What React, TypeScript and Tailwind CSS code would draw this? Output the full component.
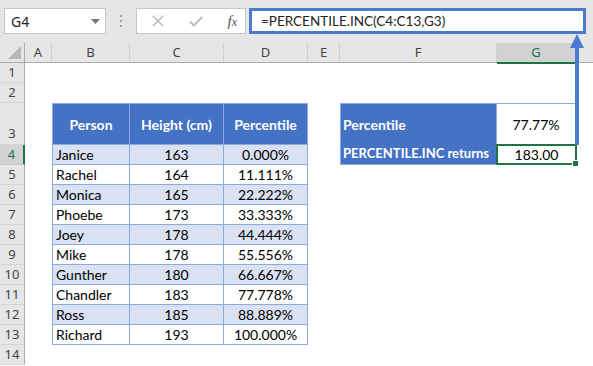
import React from "react";

const CELL_FONT = { fontFamily: "Lato, 'Open Sans', sans-serif" };

const colW = [25, 27, 78, 94, 84, 32, 157, 79];
const people: [string, number, string][] = [
  ["Janice", 163, "0.000%"],
  ["Rachel", 164, "11.111%"],
  ["Monica", 165, "22.222%"],
  ["Phoebe", 173, "33.333%"],
  ["Joey", 178, "44.444%"],
  ["Mike", 178, "55.556%"],
  ["Gunther", 180, "66.667%"],
  ["Chandler", 183, "77.778%"],
  ["Ross", 185, "88.889%"],
  ["Richard", 193, "100.000%"],
];

function RowHead({ n, active, h, bottom }: { n: number; active?: boolean; h: string; bottom?: boolean }) {
  return (
    <div
      className={`${h} w-[25px] shrink-0 flex justify-center border-b border-r ${
        bottom ? "items-end pb-[1px]" : "items-center"
      } ${
        active
          ? "bg-[#d2d2d2] text-[#217346] border-r-[#217346] border-r-2 border-b-[#c6c6c6]"
          : "bg-[#e6e6e6] text-[#444] border-b-[#d4d4d4] border-r-[#ababab]"
      } text-[13px]`}
      style={{ fontFamily: "'Noto Sans', sans-serif" }}
    >
      {n}
    </div>
  );
}

function Cell({ w, className = "", children }: { w: string; className?: string; children?: React.ReactNode }) {
  return <div className={`${w} shrink-0 ${className}`}>{children}</div>;
}

export default function App() {
  return (
    <div className="w-[593px] h-[366px] overflow-hidden bg-white relative text-[14px] text-black">
      {/* Formula bar */}
      <div className="h-[43px] bg-[#e6e6e6] flex items-start pt-[8px]">
        <div className="ml-[4px] w-[102px] h-[26px] bg-white border border-[#c6c6c6] flex items-center justify-between pl-[6px] pr-[5px]">
          <span className="text-[14px] text-[#222]" style={{ fontFamily: "'Noto Sans', sans-serif" }}>G4</span>
          <svg width="9" height="5" viewBox="0 0 9 5"><path d="M0 0H9L4.5 5Z" fill="#777" /></svg>
        </div>
        <div className="w-[30px] h-[26px] flex items-center justify-center">
          <svg width="3" height="12" viewBox="0 0 3 12">
            <rect x="0" y="0" width="2" height="2" fill="#a0a0a0" />
            <rect x="0" y="5" width="2" height="2" fill="#a0a0a0" />
            <rect x="0" y="10" width="2" height="2" fill="#a0a0a0" />
          </svg>
        </div>
        <div className="w-[110px] h-[26px] bg-white border border-[#c6c6c6] flex items-center pl-[15px] pr-[8px] justify-between">
          <svg width="12" height="12" viewBox="0 0 12 12"><path d="M1 1L11 11M11 1L1 11" stroke="#bdbdbd" strokeWidth="1.6" /></svg>
          <svg width="14" height="11" viewBox="0 0 14 11"><path d="M1 5.5L5 9.5L13 1" stroke="#bdbdbd" strokeWidth="2" fill="none" /></svg>
          <span className="italic text-[#555] text-[15px] leading-none" style={{ fontFamily: "'Liberation Serif', serif" }}>
            f<span className="text-[12px]">x</span>
          </span>
        </div>
        <div className="ml-[3px] w-[337px] h-[26px] bg-white border-[3px] border-[#4a7bd0] flex items-center pl-[9px]">
          <span className="text-[13.5px] text-[#222] whitespace-nowrap" style={CELL_FONT}>=PERCENTILE.INC(C4:C13,G3)</span>
        </div>
      </div>

      {/* Column headers */}
      <div className="h-[20px] flex bg-[#e6e6e6] border-b border-[#ababab] text-[13px] text-[#444]" style={{ fontFamily: "'Noto Sans', sans-serif" }}>
        <div className="w-[25px] shrink-0 border-r border-[#ababab] relative">
          <svg className="absolute left-[8px] top-[3px]" width="13" height="13" viewBox="0 0 13 13"><path d="M13 0V13H0Z" fill="#b8b8b8" /></svg>
        </div>
        {["A", "B", "C", "D", "E", "F"].map((l, i) => (
          <div key={l} className="shrink-0 border-r border-[#d0d0d0] flex items-center justify-center" style={{ width: colW[i + 1] }}>
            {l}
          </div>
        ))}
        <div className="w-[79px] shrink-0 bg-[#d2d2d2] border-b-2 border-[#217346] border-r border-r-[#d0d0d0] flex items-center justify-center text-[#217346] h-[21px]">
          G
        </div>
        <div className="flex-1" />
      </div>

      {/* Rows 1-2 */}
      <div className="flex"><RowHead n={1} h="h-[20px]" /></div>
      <div className="flex"><RowHead n={2} h="h-[20px]" /></div>

      {/* Row 3 */}
      <div className="flex" style={CELL_FONT}>
        <RowHead n={3} h="h-[42px]" bottom />
        <Cell w="w-[27px]" />
        <Cell w="w-[78px]" className="h-[42px] bg-[#4472c4] border border-[#8ea9db] text-white font-bold flex items-center justify-center">Person</Cell>
        <Cell w="w-[94px]" className="h-[42px] bg-[#4472c4] border-y border-r border-[#8ea9db] text-white font-bold flex items-center justify-center">Height (cm)</Cell>
        <Cell w="w-[84px]" className="h-[42px] bg-[#4472c4] border-y border-r border-[#8ea9db] text-white font-bold flex items-center justify-center">Percentile</Cell>
        <Cell w="w-[32px]" />
        <Cell w="w-[157px]" className="h-[42px] bg-[#4472c4] border border-[#8ea9db] text-white font-bold flex items-center pl-[2px]">Percentile</Cell>
        <Cell w="w-[79px]" className="h-[42px] bg-white border-y border-r border-[#8ea9db] flex items-center justify-center">77.77%</Cell>
      </div>

      {/* Data rows */}
      {people.map(([name, h, p], i) => (
        <div key={name} className="flex" style={CELL_FONT}>
          <RowHead n={i + 4} h="h-[20px]" active={i === 0} />
          <Cell w="w-[27px]" />
          <Cell w="w-[78px]" className={`h-[20px] border-x border-b border-[#8ea9db] flex items-center pl-[3px] ${i % 2 === 0 ? "bg-[#d9e1f2]" : "bg-white"}`}>{name}</Cell>
          <Cell w="w-[94px]" className={`h-[20px] border-r border-b border-[#8ea9db] flex items-center justify-center ${i % 2 === 0 ? "bg-[#d9e1f2]" : "bg-white"}`}>{h}</Cell>
          <Cell w="w-[84px]" className={`h-[20px] border-r border-b border-[#8ea9db] flex items-center justify-center ${i % 2 === 0 ? "bg-[#d9e1f2]" : "bg-white"}`}>{p}</Cell>
          {i === 0 && (
            <>
              <Cell w="w-[32px]" />
              <Cell w="w-[157px]" className="h-[21px] -mt-[1px] bg-[#4472c4] border-x border-b border-[#8ea9db] text-white font-bold text-[13px] flex items-center pl-[2px] whitespace-nowrap">PERCENTILE.INC returns</Cell>
              <Cell w="w-[81px]" className="h-[21px] -mt-[1px] -ml-[1px] bg-white border-2 border-[#217346] flex items-center justify-center relative">
                183.00
                <span className="absolute right-[-4px] bottom-[-4px] w-[5px] h-[5px] bg-[#217346] border border-white box-content" />
              </Cell>
            </>
          )}
        </div>
      ))}
      <div className="flex"><RowHead n={14} h="h-[20px]" /></div>

      {/* Arrow overlay */}
      <svg className="absolute left-0 top-0 pointer-events-none" width="593" height="366" viewBox="0 0 593 366">
        <rect x="575" y="46" width="4" height="99" fill="#4a7bd0" />
        <path d="M570 48L584 48L577 34Z" fill="#4a7bd0" />
      </svg>
    </div>
  );
}
